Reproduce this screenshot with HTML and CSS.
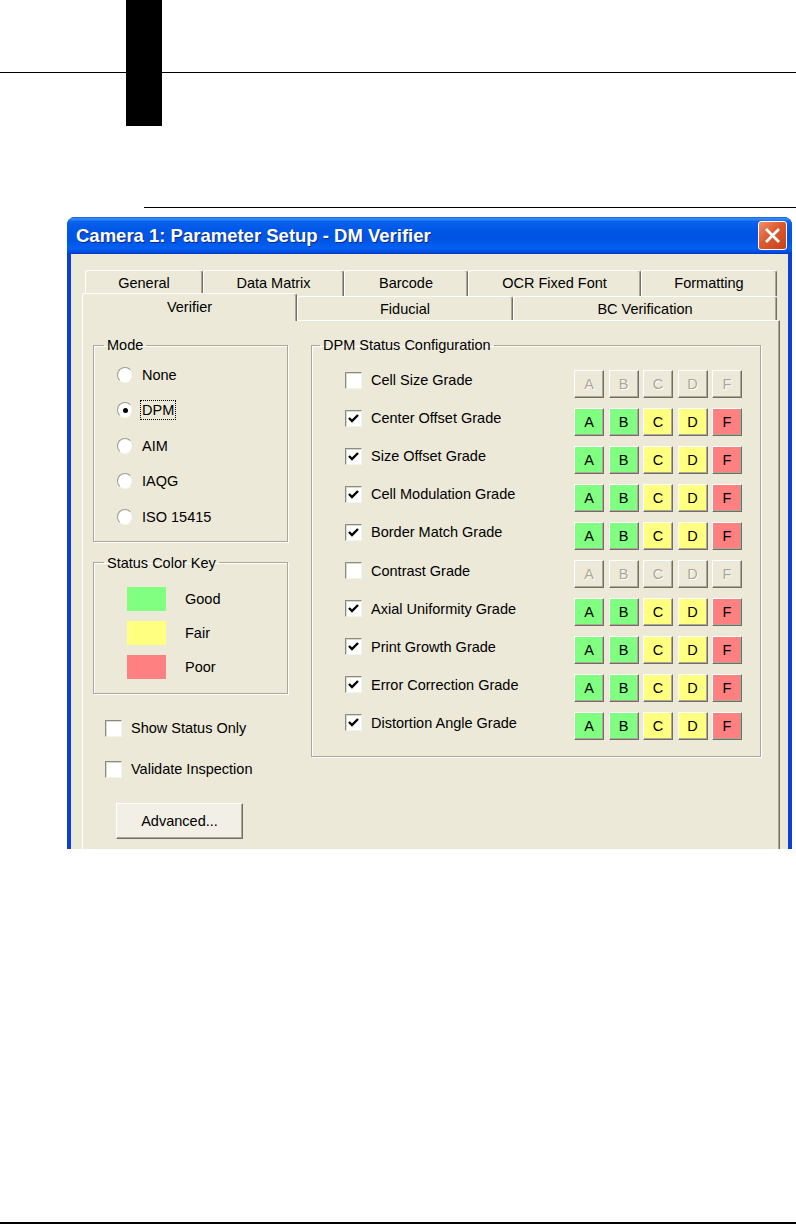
FILE: index.html
```html
<!DOCTYPE html>
<html lang="en">
<head>
  <meta charset="UTF-8" />
  <title>Camera 1: Parameter Setup - DM Verifier</title>
  <link rel="stylesheet" href="styles.css">
</head>
<body>
  <div class="page-head">
    <div class="head-rule"></div>
    <div class="thumb-tab"></div>
  </div>
  <div class="section-rule"></div>

  <div class="window">
    <div class="titlebar">
      <span class="title">Camera 1: Parameter Setup - DM Verifier</span>
      <button class="close-btn" aria-label="Close">
        <svg width="17" height="17" viewBox="0 0 17 17"><path d="M3 3 L14 14 M14 3 L3 14" stroke="#fff" stroke-width="2.8" stroke-linecap="square" fill="none"/></svg>
      </button>
    </div>
    <div class="frame">
      <div class="client">
        <div class="tabs">
          <div class="tab-row back">
            <div class="tab" style="width:118px">General</div>
            <div class="tab" style="width:141px">Data Matrix</div>
            <div class="tab" style="width:124px">Barcode</div>
            <div class="tab" style="width:173px">OCR Fixed Font</div>
            <div class="tab" style="width:136px">Formatting</div>
          </div>
          <div class="tab-row front">
            <div class="tab selected" style="width:215px">Verifier</div>
            <div class="tab" style="width:216px">Fiducial</div>
            <div class="tab" style="width:264px">BC Verification</div>
          </div>
        </div>

        <div class="tab-panel">
          <div class="left-col">
            <fieldset class="group mode-group">
              <legend>Mode</legend>
              <div class="opt"><span class="radio"></span><span>None</span></div>
              <div class="opt"><span class="radio on"></span><span class="focus">DPM</span></div>
              <div class="opt"><span class="radio"></span><span>AIM</span></div>
              <div class="opt"><span class="radio"></span><span>IAQG</span></div>
              <div class="opt"><span class="radio"></span><span>ISO 15415</span></div>
            </fieldset>

            <fieldset class="group key-group">
              <legend>Status Color Key</legend>
              <div class="key-row"><span class="swatch good"></span><span>Good</span></div>
              <div class="key-row"><span class="swatch fair"></span><span>Fair</span></div>
              <div class="key-row"><span class="swatch poor"></span><span>Poor</span></div>
            </fieldset>

            <div class="check-row"><span class="check"></span><span>Show Status Only</span></div>
            <div class="check-row"><span class="check"></span><span>Validate Inspection</span></div>

            <button class="push-btn">Advanced...</button>
          </div>

          <fieldset class="group dpm-group">
            <legend>DPM Status Configuration</legend>
            <div class="grade-row">
              <span class="check"></span><span class="grade-name">Cell Size Grade</span>
              <div class="grades off"><span class="g">A</span><span class="g">B</span><span class="g">C</span><span class="g">D</span><span class="g">F</span></div>
            </div>
            <div class="grade-row">
              <span class="check on"><svg viewBox="0 0 15 15"><polyline points="3,7 6,10 12,4"/></svg></span><span class="grade-name">Center Offset Grade</span>
              <div class="grades"><span class="g">A</span><span class="g">B</span><span class="g">C</span><span class="g">D</span><span class="g">F</span></div>
            </div>
            <div class="grade-row">
              <span class="check on"><svg viewBox="0 0 15 15"><polyline points="3,7 6,10 12,4"/></svg></span><span class="grade-name">Size Offset Grade</span>
              <div class="grades"><span class="g">A</span><span class="g">B</span><span class="g">C</span><span class="g">D</span><span class="g">F</span></div>
            </div>
            <div class="grade-row">
              <span class="check on"><svg viewBox="0 0 15 15"><polyline points="3,7 6,10 12,4"/></svg></span><span class="grade-name">Cell Modulation Grade</span>
              <div class="grades"><span class="g">A</span><span class="g">B</span><span class="g">C</span><span class="g">D</span><span class="g">F</span></div>
            </div>
            <div class="grade-row">
              <span class="check on"><svg viewBox="0 0 15 15"><polyline points="3,7 6,10 12,4"/></svg></span><span class="grade-name">Border Match Grade</span>
              <div class="grades"><span class="g">A</span><span class="g">B</span><span class="g">C</span><span class="g">D</span><span class="g">F</span></div>
            </div>
            <div class="grade-row">
              <span class="check"></span><span class="grade-name">Contrast Grade</span>
              <div class="grades off"><span class="g">A</span><span class="g">B</span><span class="g">C</span><span class="g">D</span><span class="g">F</span></div>
            </div>
            <div class="grade-row">
              <span class="check on"><svg viewBox="0 0 15 15"><polyline points="3,7 6,10 12,4"/></svg></span><span class="grade-name">Axial Uniformity Grade</span>
              <div class="grades"><span class="g">A</span><span class="g">B</span><span class="g">C</span><span class="g">D</span><span class="g">F</span></div>
            </div>
            <div class="grade-row">
              <span class="check on"><svg viewBox="0 0 15 15"><polyline points="3,7 6,10 12,4"/></svg></span><span class="grade-name">Print Growth Grade</span>
              <div class="grades"><span class="g">A</span><span class="g">B</span><span class="g">C</span><span class="g">D</span><span class="g">F</span></div>
            </div>
            <div class="grade-row">
              <span class="check on"><svg viewBox="0 0 15 15"><polyline points="3,7 6,10 12,4"/></svg></span><span class="grade-name">Error Correction Grade</span>
              <div class="grades"><span class="g">A</span><span class="g">B</span><span class="g">C</span><span class="g">D</span><span class="g">F</span></div>
            </div>
            <div class="grade-row">
              <span class="check on"><svg viewBox="0 0 15 15"><polyline points="3,7 6,10 12,4"/></svg></span><span class="grade-name">Distortion Angle Grade</span>
              <div class="grades"><span class="g">A</span><span class="g">B</span><span class="g">C</span><span class="g">D</span><span class="g">F</span></div>
            </div>
          </fieldset>
        </div>
      </div>
    </div>
  </div>

  <div class="foot-rule"></div>
</body>
</html>
```

FILE: styles.css
```css
* {
  box-sizing: border-box;
}

body {
  margin: 0;
  background: #fff;
  color: #000;
  font-family: "Liberation Sans", Arial, sans-serif;
  font-size: 14.5px;
}

/* page decoration */
.page-head {
  position: relative;
  height: 126px;
  padding-top: 72px;
}

.head-rule {
  height: 1px;
  background: #000;
}

.thumb-tab {
  position: absolute;
  left: 126px;
  top: 0;
  width: 36px;
  height: 126px;
  background: #000;
}

.section-rule {
  margin: 81px 0 0 144px;
  height: 1px;
  background: #000;
}

.foot-rule {
  margin-top: 373px;
  height: 2px;
  background: #000;
}

/* dialog window */
.window {
  margin: 9px 0 0 67px;
  width: 725px;
  height: 632px;
  display: flex;
  flex-direction: column;
  overflow: hidden;
  border-radius: 8px 8px 0 0;
  background: #0846d9;
}

.titlebar {
  flex: none;
  height: 37px;
  display: flex;
  align-items: center;
  justify-content: space-between;
  padding: 0 5px 0 9px;
  background: linear-gradient(to bottom, #0a5ee8 0%, #3d8ef7 5%, #0b62ec 12%, #0056e6 35%, #0054e3 62%, #0360f2 85%, #004fdf 94%, #0038c8 100%);
}

.title {
  color: #fff;
  font-weight: bold;
  font-size: 18.5px;
  text-shadow: 1px 1px 0 #0b2a8c;
}

.close-btn {
  width: 29px;
  height: 29px;
  padding: 0;
  border: 1px solid #fff;
  border-radius: 3px;
  background: linear-gradient(135deg, #ee8f6c 0%, #dc5a30 45%, #c7421a 100%);
  display: flex;
  align-items: center;
  justify-content: center;
}

.frame {
  flex: 1;
  padding: 0 4px;
  background: linear-gradient(to right, #0b3fd6, #1a5cec 50%, #0b3fd6);
}

.client {
  height: 100%;
  background: #ece9d8;
  padding: 16px 8px 0 11px;
}

/* tabs */
.tab-row {
  display: flex;
}

.tab-row.back {
  height: 26px;
  padding-left: 3px;
}

.tab-row.front {
  height: 27px;
  margin-top: -3px;
  align-items: flex-end;
}

.tab {
  flex: none;
  height: 24px;
  padding-top: 3px;
  line-height: 18px;
  text-align: center;
  background: #ece9d8;
  border: 1px solid;
  border-bottom: none;
  border-color: #fff #716f64 #fff #fff;
  border-radius: 3px 3px 0 0;
  box-shadow: inset -1px 0 0 #aca899;
}

.back .tab {
  height: 26px;
}

.front .tab.selected {
  position: relative;
  z-index: 1;
  height: 28px;
  margin-bottom: -1px;
  padding-top: 4px;
}

.tab-panel {
  display: flex;
  align-items: flex-start;
  gap: 23px;
  min-height: 600px;
  padding: 15px 0 0 10px;
  border: 1px solid;
  border-color: #fff #716f64 #716f64 #fff;
  box-shadow: inset -1px 0 0 #aca899;
}

/* group boxes */
.group {
  margin: 0;
  padding: 3px 0 6px 0;
  min-width: 0;
  border: 1px solid #aca899;
  box-shadow: inset 1px 1px 0 #fff, 1px 1px 0 #fff;
}

.group legend {
  margin-left: 10px;
  padding: 0 3px;
  line-height: 18px;
}

.left-col {
  width: 195px;
  flex: none;
  display: flex;
  flex-direction: column;
  align-items: flex-start;
}

.mode-group,
.key-group {
  width: 195px;
}

.opt {
  height: 35.5px;
  display: flex;
  align-items: center;
  gap: 9px;
  padding-left: 23px;
}

.radio {
  flex: none;
  width: 16px;
  height: 16px;
  border-radius: 50%;
  background: #fff;
  border: 1px solid;
  border-color: #9d9b8e #e6e4d8 #f6f5ef #9d9b8e;
  display: flex;
  align-items: center;
  justify-content: center;
}

.radio.on::after {
  content: "";
  width: 5px;
  height: 5px;
  border-radius: 50%;
  background: #000;
}

.focus {
  outline: 1px dotted #000;
  outline-offset: 1px;
}

.key-group {
  margin-top: 12px;
  padding-top: 10px;
  padding-bottom: 9px;
}

.key-row {
  height: 34px;
  display: flex;
  align-items: center;
  gap: 19px;
  padding-left: 33px;
}

.swatch {
  width: 39px;
  height: 24px;
}

.swatch.good { background: #80ff80; }
.swatch.fair { background: #ffff80; }
.swatch.poor { background: #ff8080; }

.check-row {
  height: 41px;
  display: flex;
  align-items: center;
  gap: 9px;
  padding-left: 12px;
}

.check-row:first-of-type {
  margin-top: 14px;
}

.check {
  flex: none;
  width: 17px;
  height: 17px;
  background: #fff;
  border: 1px solid;
  border-color: #8c8a7e #f4f3ec #f4f3ec #8c8a7e;
  box-shadow: inset 1px 1px 0 #dcd9cb;
}

.check svg {
  display: block;
  width: 15px;
  height: 15px;
}

.check polyline {
  fill: none;
  stroke: #000;
  stroke-width: 2.4;
}

.push-btn {
  margin: 13px 0 0 23px;
  width: 127px;
  height: 36px;
  font: inherit;
  color: #000;
  background: #f1efe6;
  border: 1px solid;
  border-color: #fff #716f64 #716f64 #fff;
  box-shadow: inset -1px -1px 0 #aca899;
}

/* DPM grades */
.dpm-group {
  width: 450px;
  flex: none;
  padding-top: 10.5px;
  padding-bottom: 11px;
}

.dpm-group legend {
  margin-left: 8px;
}

.grade-row {
  height: 38.1px;
  display: flex;
  align-items: center;
  gap: 9px;
  padding: 0 18px 0 33px;
}

/* label and box sit a little above the grade buttons */
.grade-row .check,
.grade-row .grade-name {
  margin-bottom: 7px;
}

.grades {
  margin-left: auto;
  display: flex;
  gap: 4.5px;
}

.g {
  width: 30px;
  height: 28px;
  display: flex;
  align-items: center;
  justify-content: center;
  border: 1px solid;
  border-color: #fff #716f64 #716f64 #fff;
  box-shadow: inset -1px -1px 0 #aca899;
}

.g:nth-child(-n+2) { background: #80ff80; }
.g:nth-child(3),
.g:nth-child(4) { background: #ffff80; }
.g:nth-child(5) { background: #ff8080; }

.grades.off .g {
  background: #ece9d8;
  color: #aca899;
  text-shadow: 1px 1px 0 #fff;
}
```
